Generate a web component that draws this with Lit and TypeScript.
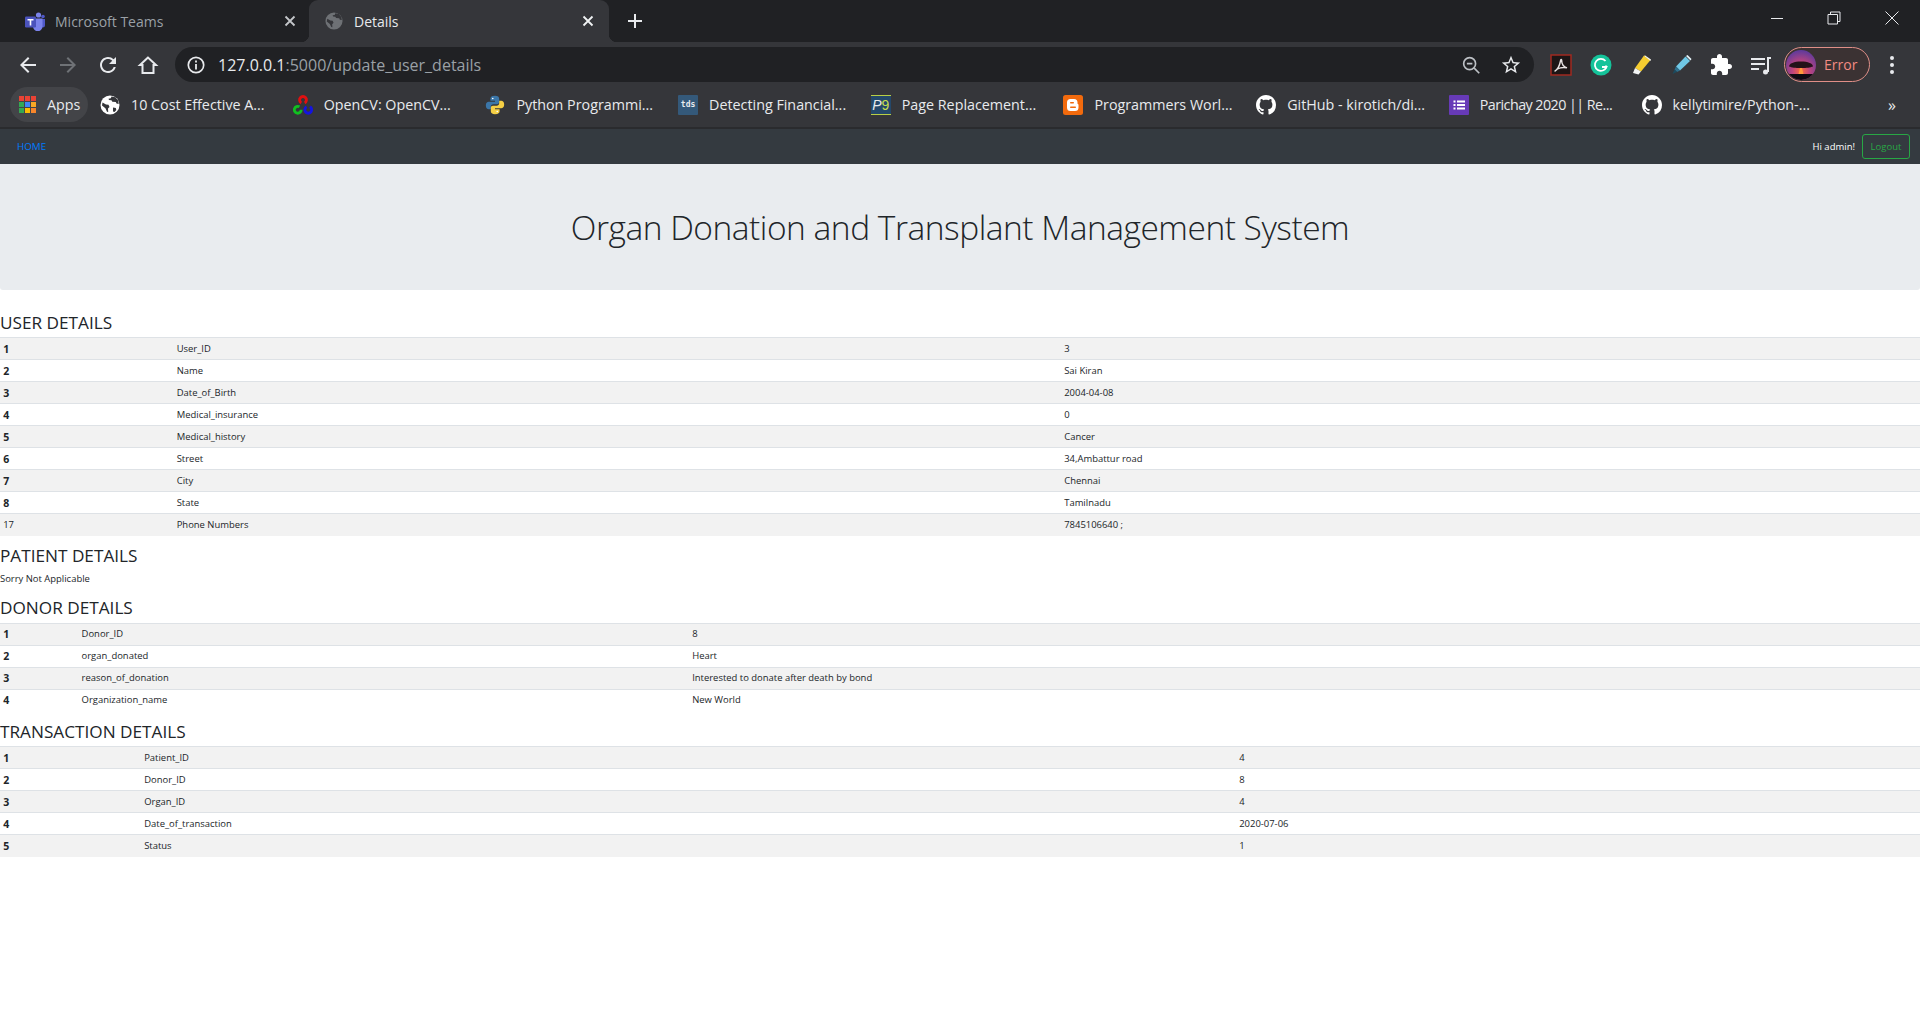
import { LitElement, html, css, svg } from "lit";
import { customElement } from "lit/decorators.js";
import { classMap } from "lit/directives/class-map.js";

const GITHUB = svg`<svg class="bm-ico" viewBox="0 0 16 16"><circle cx="8" cy="8" r="7" fill="#35363a"/><path fill="#fff" d="M8 0C3.58 0 0 3.58 0 8c0 3.54 2.29 6.53 5.47 7.59.4.07.55-.17.55-.38 0-.19-.01-.82-.01-1.49-2.01.37-2.53-.49-2.69-.94-.09-.23-.48-.94-.82-1.13-.28-.15-.68-.52-.01-.53.63-.01 1.08.58 1.23.82.72 1.21 1.87.87 2.33.66.07-.52.28-.87.51-1.07-1.78-.2-3.64-.89-3.64-3.95 0-.87.31-1.59.82-2.15-.08-.2-.36-1.02.08-2.12 0 0 .67-.21 2.2.82.64-.18 1.32-.27 2-.27.68 0 1.36.09 2 .27 1.53-1.04 2.2-.82 2.2-.82.44 1.1.16 1.92.08 2.12.51.56.82 1.27.82 2.15 0 3.07-1.87 3.75-3.65 3.95.29.25.54.73.54 1.48 0 1.07-.01 1.93-.01 2.2 0 .21.15.46.55.38A8.013 8.013 0 0 0 16 8c0-4.42-3.58-8-8-8z"/></svg>`;

const GLOBE = svg`<svg class="bm-ico" viewBox="0 0 20 20"><circle cx="10" cy="10" r="9.5" fill="#fff"/><path fill="#35363a" d="M2.5 7.5 6 9.5l2.5.3 1 2.2-1.5 1.5.2 3.5-1.2-.2-1.6-3.6L2 10.5zM11.5 1.5l-.7 1.7-2.3.5.5 1.3 2.5.3.8 1.5 3.5.2.7 1.5 2.2.4-.5-3.4-2.9-3.3zM13 12.5l2.8.5.5 2-1.8 2-1.5-.6z"/></svg>`;

const OPENCV = svg`<svg class="bm-ico" viewBox="0 0 21 21" fill="none" stroke-width="3"><path stroke="#e01010" d="M8.7 8.3A3.6 3.6 0 1 1 12.3 8.3"/><path stroke="#10c020" d="M8.6 15.5A3.6 3.6 0 1 1 6.8 12.4"/><path stroke="#1414e0" d="M17.8 12.4A3.6 3.6 0 1 1 14.2 12.4"/></svg>`;

const PYTHON = svg`<svg class="bm-ico" viewBox="0 0 24 24"><path fill="#3b76a8" d="M12 1C8 1 6.5 2.5 6.5 4.5V7H12v1H4.5C2.5 8 1 9.5 1 12.5S2.5 17 4.5 17H7v-3c0-1.8 1.3-3 3-3h4.5c1.5 0 2.5-1.1 2.5-2.5v-4C17 2.5 15.5 1 12 1z"/><path fill="#f5cf45" d="M12 23c4 0 5.5-1.5 5.5-3.5V17H12v-1h7.5c2 0 3.5-1.5 3.5-4.500S21.500 7 19.500 7H17v3c0 1.800-1.300 3-3 3H9.500C8 13 7 14.100 7 15.500v4C7 21.500 8.500 23 12 23z"/><circle cx="9.3" cy="4.2" r="1" fill="#fff"/><circle cx="14.7" cy="19.8" r="1" fill="#fff"/></svg>`;

const BLOGGER = svg`<svg class="bm-ico" viewBox="0 0 20 20"><rect width="20" height="20" rx="2.5" fill="#f26a0d"/><path fill="#fff" d="M7.5 4H11a3.500 3.500 0 0 1 3.500 3.500v.8c0 .7.5 1.200 1 1.200v3A3.500 3.500 0 0 1 12 16H7.500A3.500 3.500 0 0 1 4 12.500v-5A3.500 3.500 0 0 1 7.500 4z"/><rect x="7" y="7" width="4" height="1.5" rx=".7" fill="#f26a0d"/><rect x="7" y="11.5" width="6" height="1.5" rx=".7" fill="#f26a0d"/></svg>`;

const FORMS = svg`<svg class="bm-ico" viewBox="0 0 20 20"><rect width="20" height="20" rx="1" fill="#673ab7"/><g fill="#fff"><rect x="4.5" y="5.5" width="2" height="2"/><rect x="8" y="5.5" width="8" height="2"/><rect x="4.5" y="9" width="2" height="2"/><rect x="8" y="9" width="8" height="2"/><rect x="4.5" y="12.5" width="2" height="2"/><rect x="8" y="12.5" width="8" height="2"/></g></svg>`;

const BOOKMARKS = [
  { icon: GLOBE, label: "10 Cost Effective A..." },
  { icon: OPENCV, label: "OpenCV: OpenCV..." },
  { icon: PYTHON, label: "Python Programmi..." },
  { icon: html`<span class="tds">tds</span>`, label: "Detecting Financial..." },
  { icon: html`<span class="p9"><i>P</i><b>9</b></span>`, label: "Page Replacement..." },
  { icon: BLOGGER, label: "Programmers Worl..." },
  { icon: GITHUB, label: "GitHub - kirotich/di..." },
  { icon: FORMS, label: "Parichay 2020 || Re...", tight: true },
  { icon: GITHUB, label: "kellytimire/Python-..." },
];

const APPS_COLORS = ["#ea4335", "#ea4335", "#ea4335", "#34a853", "#4285f4", "#f9a825", "#34a853", "#fbbc04", "#f9862a"];

type Row = { n: string; k: string; v: string; plain?: boolean };
const rows = (list: [string, string][]): Row[] =>
  list.map(([k, v], i) => ({ n: String(i + 1), k, v }));

const USER: Row[] = [
  ...rows([
    ["User_ID", "3"],
    ["Name", "Sai Kiran"],
    ["Date_of_Birth", "2004-04-08"],
    ["Medical_insurance", "0"],
    ["Medical_history", "Cancer"],
    ["Street", "34,Ambattur road"],
    ["City", "Chennai"],
    ["State", "Tamilnadu"],
  ]),
  { n: "17", k: "Phone Numbers", v: "7845106640 ;", plain: true },
];

const DONOR = rows([
  ["Donor_ID", "8"],
  ["organ_donated", "Heart"],
  ["reason_of_donation", "Interested to donate after death by bond"],
  ["Organization_name", "New World"],
]);

const TRANSACTION = rows([
  ["Patient_ID", "4"],
  ["Donor_ID", "8"],
  ["Organ_ID", "4"],
  ["Date_of_transaction", "2020-07-06"],
  ["Status", "1"],
]);

@customElement("app-root")
export class AppRoot extends LitElement {
  static styles = css`
    :host {
      display: block;
      height: 1021px;
      background: #fff;
      overflow: hidden;
      font-family: "Open Sans", "Liberation Sans", sans-serif;
      color: #212529;
    }

    /* browser chrome */
    .tabstrip {
      display: flex;
      height: 42px;
      background: #202124;
      color: #9aa0a6;
      font-size: 14px;
    }
    .tab {
      width: 300px;
      display: flex;
      align-items: center;
      padding: 0 15px 0 20px;
      box-sizing: border-box;
      position: relative;
    }
    .tab:first-child {
      width: 309px;
      padding: 0 13px 0 25px;
    }
    .tab.active {
      background: #35363a;
      color: #e8eaed;
      border-radius: 9px 9px 0 0;
      padding-left: 16px;
    }
    .tab.active::before,
    .tab.active::after {
      content: "";
      position: absolute;
      bottom: 0;
      width: 8px;
      height: 8px;
    }
    .tab.active::before {
      left: -8px;
      background: radial-gradient(circle at 0 0, #202124 8px, #35363a 8.5px);
    }
    .tab.active::after {
      right: -8px;
      background: radial-gradient(circle at 100% 0, #202124 8px, #35363a 8.5px);
    }
    .tab-ico {
      width: 18px;
      height: 18px;
      flex: none;
      margin-right: 11px;
    }
    .tab:first-child .tab-ico {
      width: 20px;
      height: 20px;
      margin-right: 10px;
    }
    .tab-title {
      flex: 1;
    }
    .tab-x {
      width: 12px;
      height: 12px;
      flex: none;
    }
    .newtab {
      width: 18px;
      height: 18px;
      margin: 12px 0 0 17px;
    }
    .winctl {
      margin-left: auto;
      display: flex;
      height: 36px;
      align-items: center;
    }
    .winctl svg {
      width: 56px;
      height: 14px;
    }

    .toolbar {
      display: flex;
      align-items: center;
      height: 40px;
      background: #35363a;
      padding: 0 8px 0 8px;
    }
    .btn {
      width: 40px;
      height: 40px;
      flex: none;
      display: flex;
      align-items: center;
      justify-content: center;
    }
    .btn svg {
      width: 24px;
      height: 24px;
    }
    .omnibox {
      flex: none;
      width: 1359px;
      height: 35px;
      margin: 5px 7px 0;
      background: #202124;
      border-radius: 18px;
      display: flex;
      align-items: center;
      padding-left: 12px;
      box-sizing: border-box;
    }
    .omnibox .info {
      width: 18px;
      height: 18px;
      margin-right: 13px;
    }
    .url {
      font-size: 16px;
      color: #9aa0a6;
      flex: 1;
    }
    .url b {
      color: #e8eaed;
      font-weight: 400;
    }
    .omnibox .btn {
      height: 35px;
    }
    .omnibox .btn svg {
      width: 22px;
      height: 22px;
    }
    .omni-end {
      margin-right: 3px;
    }
    .toolbar > .btn {
      margin-top: 5px;
    }
    .error-pill {
      flex: none;
      margin: 5px 2px 0 3px;
      width: 86px;
      height: 35px;
      box-sizing: border-box;
      border: 1px solid #e08f88;
      border-radius: 18px;
      display: flex;
      align-items: center;
      background: #3b3233;
      color: #f28b82;
      font-size: 14px;
    }
    .error-pill svg {
      width: 30px;
      height: 30px;
      margin: 0 8px 0 1px;
      flex: none;
    }

    .bookmarks {
      display: flex;
      align-items: center;
      height: 45px;
      background: #35363a;
      color: #e8eaed;
      font-size: 14.3px;
      border-bottom: 2px solid #2a2b2e;
      padding-left: 10px;
    }
    .apps {
      display: flex;
      align-items: center;
      width: 78px;
      height: 35px;
      margin-right: 12px;
      box-sizing: border-box;
      padding-left: 9px;
      border-radius: 18px;
      background: #434448;
      gap: 11px;
    }
    .apps-grid {
      display: grid;
      grid-template-columns: repeat(3, 5px);
      grid-auto-rows: 5px;
      gap: 1px;
    }
    .apps-grid i {
      display: block;
    }
    .bm {
      width: 192.7px;
      flex: none;
      display: flex;
      align-items: center;
      gap: 11px;
      white-space: nowrap;
    }
    .bm.tight span:last-child {
      letter-spacing: -0.55px;
    }
    .bm-ico {
      width: 20px;
      height: 20px;
      flex: none;
    }
    .tds {
      width: 20px;
      height: 20px;
      flex: none;
      background: #34597a;
      border-radius: 1px;
      color: #e8eaed;
      font: 700 8px/20px "DejaVu Sans Mono", monospace;
      text-align: center;
    }
    .p9 {
      width: 20px;
      height: 18px;
      flex: none;
      background: #24486a;
      border-top: 1px solid #b8cf45;
      border-bottom: 1px solid #b8cf45;
      font: 14px/18px "Liberation Sans", sans-serif;
      text-align: center;
    }
    .p9 i {
      color: #e8eaed;
    }
    .p9 b {
      color: #c6dd50;
      font-weight: 400;
    }
    .chevron {
      margin-left: auto;
      margin-right: 24px;
      font-size: 16px;
      color: #e8eaed;
    }

    /* page */
    .navbar {
      display: flex;
      align-items: center;
      justify-content: space-between;
      height: 35px;
      background: #343a40;
      padding: 0 10px 0 17px;
      font-size: 9.5px;
    }
    .home {
      color: #007bff;
      font-size: 9.8px;
    }
    .nav-right {
      display: flex;
      align-items: center;
      gap: 7px;
      color: #fff;
    }
    .logout {
      width: 48px;
      height: 25px;
      box-sizing: border-box;
      border: 1px solid #28a745;
      border-radius: 3px;
      color: #28a745;
      display: flex;
      align-items: center;
      justify-content: center;
    }
    .jumbotron {
      height: 126px;
      background: #e9ecef;
      border-radius: 0 0 3px 3px;
      margin-bottom: 21px;
      display: flex;
      align-items: center;
      justify-content: center;
    }
    h1 {
      margin: 0;
      font-size: 33.5px;
      font-weight: 300;
      line-height: 42px;
      letter-spacing: -0.48px;
    }
    h3 {
      margin: 0 0 3px;
      padding-top: 0.5px;
      font-size: 17.2px;
      font-weight: 500;
      line-height: 22.5px;
    }
    .note {
      margin: 0 0 10px;
      font-size: 9.45px;
      line-height: 16px;
    }
    table {
      width: 100%;
      table-layout: fixed;
      border-collapse: collapse;
      margin-bottom: 9px;
      font-size: 9.45px;
    }
    tr {
      height: 22px;
    }
    tr:nth-child(odd) {
      background: #f2f2f2;
    }
    th,
    td {
      padding: 0 3.2px;
      box-sizing: border-box;
      border-top: 1px solid #dee2e6;
      text-align: left;
      font-weight: 400;
      line-height: 14px;
      white-space: nowrap;
    }
    th {
      font-size: 10.5px;
      font-weight: 700;
    }
  `;

  private table(data: Row[], c1: number, c2: number) {
    return html`<table>
      <colgroup>
        <col style="width:${c1}px" />
        <col style="width:${c2}px" />
        <col />
      </colgroup>
      <tbody>
        ${data.map(
          (r) => html`<tr>
            ${r.plain ? html`<td>${r.n}</td>` : html`<th scope="row">${r.n}</th>`}
            <td>${r.k}</td>
            <td>${r.v}</td>
          </tr>`
        )}
      </tbody>
    </table>`;
  }

  private renderChrome() {
    const close = (c: string) =>
      svg`<svg class="tab-x" viewBox="0 0 12 12"><path d="M1.5 1.5l9 9m0-9l-9 9" stroke=${c} stroke-width="1.8" fill="none"/></svg>`;
    return html`
      <div class="tabstrip">
        <div class="tab">
          <svg class="tab-ico" viewBox="0 0 20 20">
            <circle cx="13.5" cy="4" r="2.6" fill="#7b83eb" />
            <circle cx="18" cy="5.5" r="1.8" fill="#5059c9" />
            <path fill="#5059c9" d="M15 8h5v6a2.5 2.5 0 0 1-5 0z" />
            <path fill="#7b83eb" d="M8 7.5h9.5v8a4.7 4.7 0 0 1-9.5 0z" />
            <rect y="5.5" width="11" height="11" rx="1.2" fill="#4b53bc" />
            <path fill="#fff" d="M2.5 8h6v1.4H6.3v5H4.7v-5H2.5z" />
          </svg>
          <span class="tab-title">Microsoft Teams</span>
          ${close("#c4c7ca")}
        </div>
        <div class="tab active">
          <svg class="tab-ico" viewBox="0 0 20 20">
            <circle cx="10" cy="10" r="9.5" fill="#6e7175" />
            <path fill="#35363a" d="M2.5 7.5 6 9.5l2.5.3 1 2.2-1.5 1.5.2 3.5-1.2-.2-1.6-3.6L2 10.5zM11.5 1.5l-.7 1.7-2.3.5.5 1.3 2.5.3.8 1.5 3.5.2.7 1.5 2.2.4-.5-3.4-2.9-3.3z" />
          </svg>
          <span class="tab-title">Details</span>
          ${close("#f1f3f4")}
        </div>
        <svg class="newtab" viewBox="0 0 18 18"><path d="M9 2v14M2 9h14" stroke="#e8eaed" stroke-width="2" /></svg>
        <div class="winctl">
          <svg viewBox="0 0 56 14"><path d="M19 7.5h12" stroke="#e8eaed" fill="none" /></svg>
          <svg viewBox="0 0 56 14"><path d="M20 3.5h9.5V13H20zM22.5 3.5V1H32v9.500h-2.500" stroke="#e8eaed" fill="none" /></svg>
          <svg viewBox="0 0 56 14"><path d="M21.5 .5l13 13m0-13l-13 13" stroke="#e8eaed" fill="none" /></svg>
        </div>
      </div>
      <div class="toolbar">
        <div class="btn"><svg viewBox="0 0 24 24"><path fill="#e8eaed" d="M20 11H7.83l5.59-5.59L12 4l-8 8 8 8 1.41-1.41L7.83 13H20v-2z" /></svg></div>
        <div class="btn"><svg viewBox="0 0 24 24"><path fill="#6f7276" d="M12 4l-1.41 1.41L16.17 11H4v2h12.17l-5.58 5.59L12 20l8-8z" /></svg></div>
        <div class="btn"><svg viewBox="0 0 24 24"><path fill="#e8eaed" d="M17.65 6.35A7.958 7.958 0 0 0 12 4c-4.42 0-7.99 3.58-7.99 8s3.57 8 7.99 8c3.73 0 6.84-2.55 7.73-6h-2.08A5.99 5.99 0 0 1 12 18c-3.31 0-6-2.69-6-6s2.69-6 6-6c1.66 0 3.14.69 4.22 1.78L13 11h7V4l-2.35 2.35z" /></svg></div>
        <div class="btn"><svg viewBox="0 0 24 24"><path fill="none" stroke="#e8eaed" stroke-width="2" d="M12 4.5 4 12h2.5v8h11v-8H20z" /></svg></div>
        <div class="omnibox">
          <svg class="info" viewBox="0 0 18 18">
            <circle cx="9" cy="9" r="7.7" fill="none" stroke="#e8eaed" stroke-width="1.7" />
            <path d="M9 8v5.5M9 4.5v2" stroke="#e8eaed" stroke-width="1.8" />
          </svg>
          <span class="url"><b>127.0.0.1</b>:5000/update_user_details</span>
          <div class="btn">
            <svg viewBox="0 0 24 24" fill="none" stroke="#bdc1c6" stroke-width="1.8">
              <circle cx="10.5" cy="10.5" r="6.5" />
              <path d="M15.5 15.5 21 21M7.5 10.5h6" />
            </svg>
          </div>
          <div class="btn omni-end">
            <svg viewBox="0 0 24 24"><path fill="#e8eaed" d="M22 9.24l-7.19-.62L12 2 9.19 8.63 2 9.24l5.46 4.73L5.82 21 12 17.27 18.18 21l-1.63-7.03L22 9.24zM12 15.4l-3.76 2.27 1-4.28-3.32-2.88 4.38-.38L12 6.1l1.71 4.04 4.38.38-3.32 2.88 1 4.28L12 15.4z" /></svg>
          </div>
        </div>
        <div class="btn">
          <svg viewBox="0 0 24 24">
            <rect x="2" y="2" width="20" height="20" fill="#1d1616" stroke="#a02a20" stroke-width="1.5" />
            <path fill="none" stroke="#e8e3e3" stroke-width="1.4" d="M6 18c2.5-1.5 4.5-5 5.5-10 .2-2 1.2-2 1.2-.2 0 3 2 6 5.300 7-3-.6-7-.2-9.500 1.200C7 17 6 18.500 6 18z" />
          </svg>
        </div>
        <div class="btn">
          <svg viewBox="0 0 24 24">
            <circle cx="12" cy="12" r="10.5" fill="#15c39a" />
            <path fill="none" stroke="#fff" stroke-width="1.8" d="M16.5 8a6 6 0 1 0 1 6H13" />
            <path fill="none" stroke="#fff" stroke-width="1.8" d="M17 15.5v-3" />
          </svg>
        </div>
        <div class="btn">
          <svg viewBox="0 0 24 24">
            <path fill="#f5cd30" d="M15 2.5 21.5 7 12 18.5 6 15z" />
            <path fill="#f1f3f4" d="M6 15l6 3.5-2.5 3L4 20z" />
            <path fill="#f1f3f4" d="M15.5 2 22 6.5l-.5 1.5L16 3.5z" />
          </svg>
        </div>
        <div class="btn">
          <svg viewBox="0 0 24 24">
            <path fill="#6fc8e6" d="M16.5 3.5 21 8 11 17.5 7 13.5z" />
            <path fill="#e8f6fb" d="M17 3l4.5 4.5 1-1.5L18.5 2z" />
            <path fill="#2f6f8c" d="M7 13.5l4 4-3 1.5-2.5-2.5z" />
            <path fill="#1d4a5e" d="M5.5 16.5 8 19l-4.5 2z" />
          </svg>
        </div>
        <div class="btn">
          <svg viewBox="0 0 24 24"><path fill="#fff" d="M20.5 11H19V7c0-1.1-.9-2-2-2h-4V3.5C13 2.12 11.88 1 10.5 1S8 2.12 8 3.5V5H4c-1.1 0-1.99.9-1.99 2v3.8H3.5c1.49 0 2.7 1.21 2.7 2.7s-1.21 2.7-2.7 2.7H2V20c0 1.1.9 2 2 2h3.8v-1.5c0-1.49 1.21-2.7 2.7-2.7 1.49 0 2.7 1.21 2.7 2.7V22H17c1.1 0 2-.9 2-2v-4h1.5c1.38 0 2.5-1.12 2.5-2.5S21.88 11 20.5 11z" /></svg>
        </div>
        <div class="btn">
          <svg viewBox="0 0 24 24" fill="none" stroke="#e8eaed" stroke-width="2">
            <path d="M2 6h14M2 11h14M2 16h8" />
            <path d="M19 19V5h3" />
            <circle cx="16.5" cy="19" r="2.5" fill="#e8eaed" stroke="none" />
          </svg>
        </div>
        <div class="error-pill">
          <svg viewBox="0 0 30 30">
            <defs>
              <radialGradient id="sky" cx="50%" cy="70%" r="70%">
                <stop offset="0" stop-color="#ff6a3a" />
                <stop offset=".4" stop-color="#c0457e" />
                <stop offset="1" stop-color="#5c3a9c" />
              </radialGradient>
              <clipPath id="disc"><circle cx="15" cy="15" r="15" /></clipPath>
            </defs>
            <g clip-path="url(#disc)">
              <rect width="30" height="30" fill="url(#sky)" />
              <rect y="24" width="30" height="6" fill="#100a12" />
              <path fill="#241219" d="M3 16.5c0-3 5-5 12-5s12 2 12 5c-3 1-6 1.5-12 1.5S6 17.5 3 16.5z" />
              <path fill="#ff9a3c" d="M14 18h2l1.5 6h-5z" />
            </g>
          </svg>
          Error
        </div>
        <div class="btn">
          <svg viewBox="0 0 24 24"><g fill="#e8eaed"><circle cx="12" cy="5" r="2" /><circle cx="12" cy="12" r="2" /><circle cx="12" cy="19" r="2" /></g></svg>
        </div>
      </div>
      <div class="bookmarks">
        <div class="apps">
          <div class="apps-grid">
            ${APPS_COLORS.map((c) => html`<i style="background:${c}"></i>`)}
          </div>
          Apps
        </div>
        ${BOOKMARKS.map(
          (b) => html`<div class=${classMap({ bm: true, tight: !!b.tight })}>${b.icon}<span>${b.label}</span></div>`
        )}
        <span class="chevron">»</span>
      </div>
    `;
  }

  render() {
    return html`
      ${this.renderChrome()}
      <nav class="navbar">
        <span class="home">HOME</span>
        <div class="nav-right">
          <span>Hi admin!</span>
          <span class="logout">Logout</span>
        </div>
      </nav>
      <div class="jumbotron">
        <h1>Organ Donation and Transplant Management System</h1>
      </div>
      <h3>USER DETAILS</h3>
      ${this.table(USER, 173.5, 887.5)}
      <h3>PATIENT DETAILS</h3>
      <p class="note">Sorry Not Applicable</p>
      <h3>DONOR DETAILS</h3>
      ${this.table(DONOR, 78.4, 610.6)}
      <h3>TRANSACTION DETAILS</h3>
      ${this.table(TRANSACTION, 141, 1095)}
    `;
  }
}
